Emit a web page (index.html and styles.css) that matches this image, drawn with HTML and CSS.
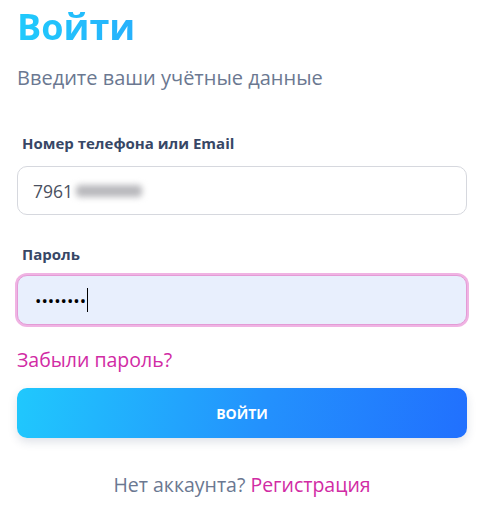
FILE: index.html
```html
<!DOCTYPE html>
<html lang="ru">
<head>
<meta charset="utf-8">
<title>Войти</title>
<link rel="stylesheet" href="styles.css">
</head>
<body>
<main class="login">
  <h1 class="title">Войти</h1>
  <p class="subtitle">Введите ваши учётные данные</p>

  <div class="group">
    <label class="label">Номер телефона или Email</label>
    <div class="field"><span class="value">7961</span><span class="blurred"></span></div>
  </div>

  <div class="group group-pass">
    <label class="label">Пароль</label>
    <div class="field field-focus"><span class="dots">••••••••</span><span class="caret"></span></div>
  </div>

  <a class="forgot" href="#">Забыли пароль?</a>

  <button class="btn" type="button">ВОЙТИ</button>

  <p class="signup">Нет аккаунта? <a href="#">Регистрация</a></p>
</main>
</body>
</html>
```

FILE: styles.css
```css
* { box-sizing: border-box; }
html, body {
  margin: 0;
  padding: 0;
  background: #ffffff;
}
body {
  font-family: "Open Sans", "Noto Sans", sans-serif;
}
.login {
  display: flex;
  flex-direction: column;
  padding: 0 21px 0 17px;
}
.title {
  margin: 0;
  padding-top: 4px;
  font-size: 36px;
  line-height: 46px;
  font-weight: 700;
  background: linear-gradient(90deg, #1fcafc 0%, #27b1fc 100%);
  -webkit-background-clip: text;
  background-clip: text;
  color: transparent;
  align-self: flex-start;
}
.subtitle {
  margin: 16px 0 0;
  font-size: 20px;
  line-height: 24px;
  color: #6b7891;
}
.group {
  display: flex;
  flex-direction: column;
  margin-top: 43px;
}
.group-pass { margin-top: 29px; }
.label {
  font-size: 15px;
  line-height: 20px;
  font-weight: 700;
  color: #374766;
  padding-left: 5px;
}
.field {
  margin-top: 13px;
  height: 49px;
  border: 1px solid #d6d8de;
  border-radius: 10px;
  display: flex;
  align-items: center;
  padding-left: 15px;
  background: #fff;
}
.value {
  font-size: 17.5px;
  color: #4a5060;
}
.blurred {
  width: 66px;
  height: 12px;
  margin-left: 3px;
  background: #b8b8bc;
  filter: blur(3px);
  border-radius: 4px;
}
.field-focus {
  margin-top: 11px;
  height: 50px;
  background: #e8effd;
  border: 1px solid #e39bd6;
  box-shadow: 0 0 0 2px #f0b3e3;
  padding-left: 17px;
}
.dots {
  font-size: 17px;
  color: #000;
  letter-spacing: 0;
}
.caret {
  width: 1px;
  height: 24px;
  background: #000;
  margin-left: 1px;
}
.forgot {
  margin-top: 23px;
  font-size: 19.5px;
  line-height: 24px;
  color: #d12ba4;
  text-decoration: none;
  align-self: flex-start;
}
.btn {
  margin-top: 16px;
  height: 50px;
  border: 0;
  border-radius: 10px;
  background: linear-gradient(100deg, #20c8fd 0%, #2391fd 55%, #2170fe 100%);
  color: #fff;
  font-family: "Open Sans", "Noto Sans", sans-serif;
  font-size: 14px;
  font-weight: 700;
  box-shadow: 0 4px 10px rgba(40, 60, 100, 0.15);
}
.signup {
  margin: 35px 0 0;
  text-align: center;
  font-size: 19.5px;
  line-height: 24px;
  color: #6b7891;
}
.signup a {
  color: #d12ba4;
  text-decoration: none;
}
```
